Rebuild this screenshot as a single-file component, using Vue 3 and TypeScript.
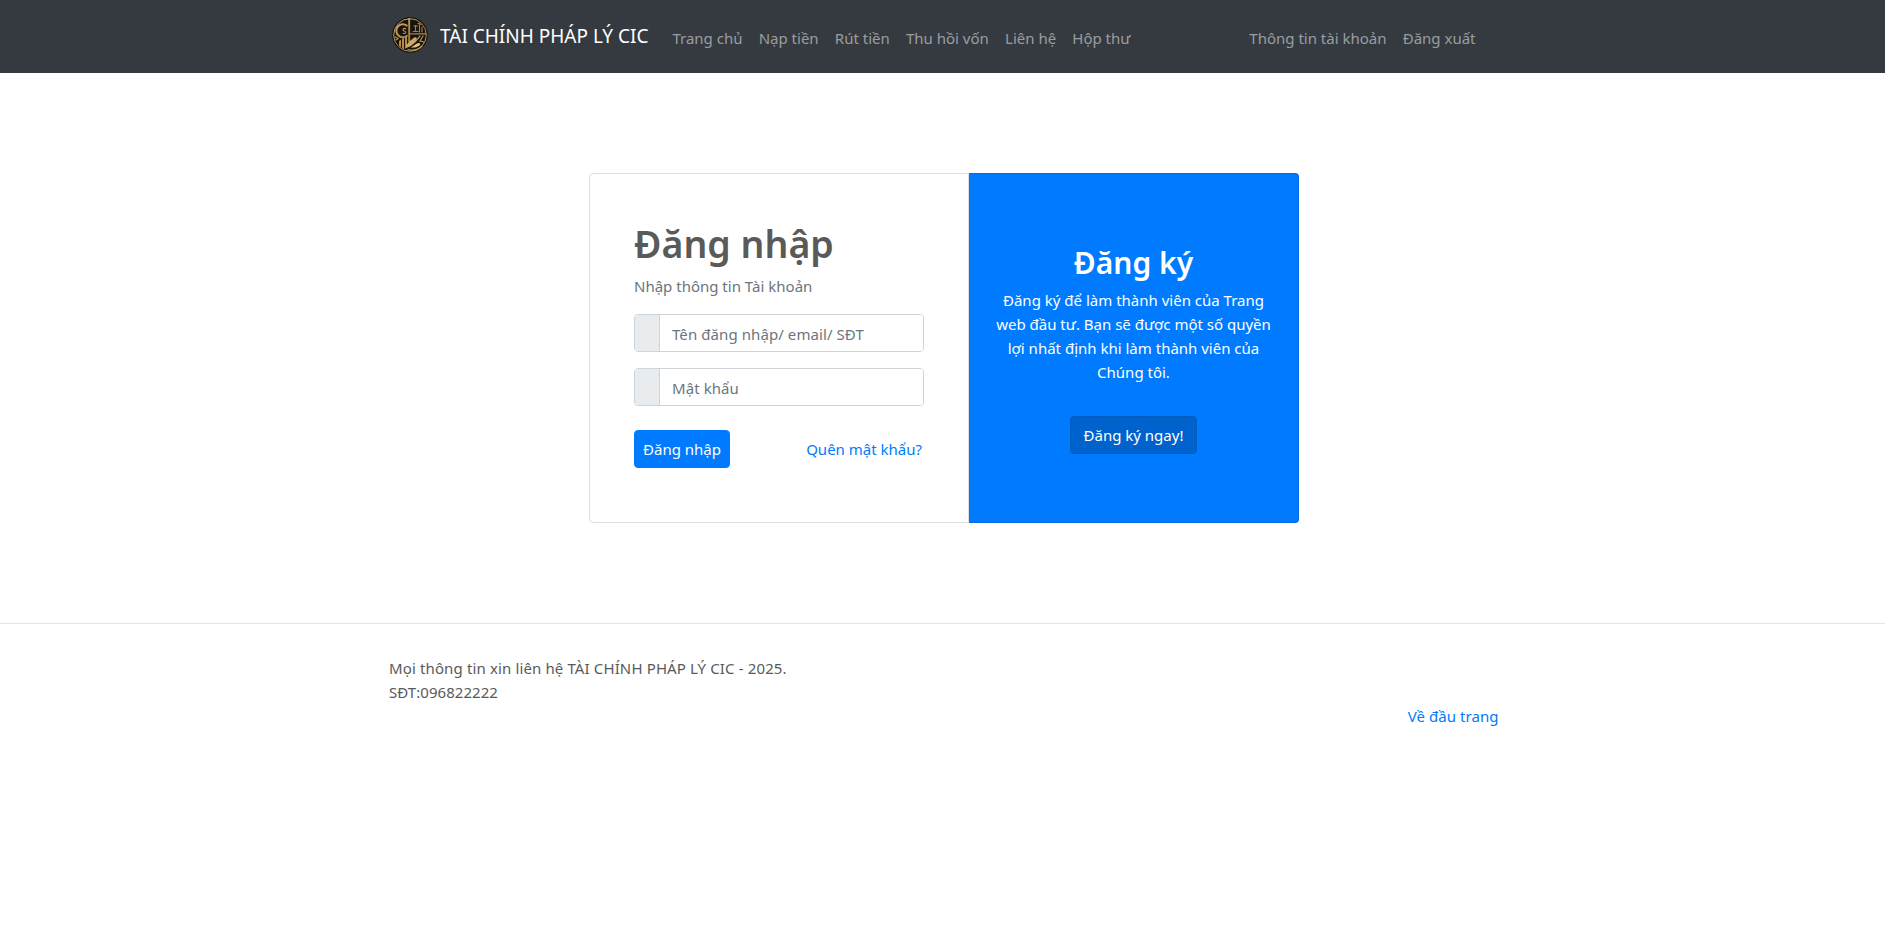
<script setup lang="ts">
import { ref } from 'vue'

const brand = 'TÀI CHÍNH PHÁP LÝ CIC'
const mainLinks: string[] = ['Trang chủ', 'Nạp tiền', 'Rút tiền', 'Thu hồi vốn', 'Liên hệ', 'Hộp thư']
const accountLinks: string[] = ['Thông tin tài khoản', 'Đăng xuất']
const account = ref('')
const password = ref('')
</script>

<template>
  <div class="page">
    <header class="navbar">
      <div class="container nav-inner">
        <a class="brand">
          <svg class="logo" viewBox="0 0 36 36" aria-hidden="true">
            <defs>
              <linearGradient id="gold" gradientUnits="userSpaceOnUse" x1="0" y1="0" x2="36" y2="36">
                <stop offset="0" stop-color="#dcba7c" />
                <stop offset=".5" stop-color="#a5803f" />
                <stop offset="1" stop-color="#cfa65c" />
              </linearGradient>
            </defs>
            <circle cx="18" cy="18" r="17.8" fill="#17130f" />
            <circle cx="18" cy="18" r="16.3" fill="none" stroke="url(#gold)" stroke-width="1" />
            <g fill="none" stroke="url(#gold)" stroke-linecap="round">
              <path d="M14.8 8.6A6.5 6.5 0 1 0 15 18.8" stroke-width="2" />
              <path d="M13.9 11.8c-3-1.3-4 1.6-1.6 2.2 2.6.7 1.6 3.3-1.2 2.2" stroke-width="1.1" />
              <path d="M17.2 1.2v24" stroke-width="1.9" stroke-linecap="butt" />
              <path d="M18 16.8h15.5" stroke-width="1.3" />
              <path d="M21 14.5h5M23.5 8.5v6M27.5 6v9M30 10v5M22 9h3.5M26 6.5l3 1" stroke-width="1.1" />
              <path d="M3.2 20l3 1.5M3.8 23l2-1" stroke-width="1.1" />
              <path d="M16 32.5c5.5 1.7 10 .7 14-3.5" stroke-width="1.3" />
              <path d="M28 19l-5 6M31 19l-3 5 4 1" stroke-width="1.2" />
            </g>
            <path d="M7 24l2-1.5v8L7 28.8zM10 22l2-1.5v12L10 31zM13 20.5l2-1.5v11L13 32z" fill="#b58b45" />
            <path d="M14 29c2.5-4.5 5.5-6 7.5-8 1.8-1.5 4.2-.2 3 1.8-1.8 3.5-4.5 6.5-10.5 8.2z" fill="#cda76b" />
            <path d="M18.5 30.4c3.5-1 5-3.8 8-4.4 2.3-.1 2.4 1.6.6 2.7-2.6 1.5-5.1 2.3-8.6 1.7z" fill="#e0c084" />
          </svg>
          <span>{{ brand }}</span>
        </a>
        <nav class="links">
          <a v-for="link in mainLinks" :key="link">{{ link }}</a>
        </nav>
        <nav class="links account">
          <a v-for="link in accountLinks" :key="link">{{ link }}</a>
        </nav>
      </div>
    </header>

    <main class="cards">
      <form class="card login" @submit.prevent>
        <h1>Đăng nhập</h1>
        <p class="hint">Nhập thông tin Tài khoản</p>
        <div class="field">
          <span class="addon"></span>
          <input v-model="account" type="text" placeholder="Tên đăng nhập/ email/ SĐT" />
        </div>
        <div class="field last">
          <span class="addon"></span>
          <input v-model="password" type="password" placeholder="Mật khẩu" />
        </div>
        <div class="actions">
          <button class="btn submit" type="submit">Đăng nhập</button>
          <a class="forgot">Quên mật khẩu?</a>
        </div>
      </form>
      <section class="card register">
        <h2>Đăng ký</h2>
        <p>Đăng ký để làm thành viên của Trang web đầu tư. Bạn sẽ được một số quyền lợi nhất định khi làm thành viên của Chúng tôi.</p>
        <button class="btn join" type="button">Đăng ký ngay!</button>
      </section>
    </main>

    <footer class="footer">
      <div class="container foot-inner">
        <p>Mọi thông tin xin liên hệ {{ brand }} - 2025.</p>
        <p class="phone">SĐT:096822222</p>
        <a class="top">Về đầu trang</a>
      </div>
    </footer>
  </div>
</template>

<style>
body {
  margin: 0;
  background: #fff;
}
</style>

<style scoped>
.page {
  color: #5a5a5a;
  font: 15px/24px "Noto Sans", "Liberation Sans", sans-serif;
}
.page * {
  box-sizing: border-box;
}
h1, h2, p {
  margin: 0;
}
a {
  cursor: pointer;
}
.container {
  width: 1110px;
  margin: 0 auto;
}
.navbar {
  height: 73px;
  background: #343a40;
}
.nav-inner {
  display: flex;
  height: 73px;
}
.brand {
  display: flex;
  align-items: center;
  height: 70px;
  padding-left: 4px;
  color: #fff;
  font-size: 19px;
  line-height: 30px;
  white-space: nowrap;
}
.brand span {
  padding-top: 1px;
}
.logo {
  width: 36px;
  height: 36px;
  margin-right: 12.5px;
}
.links {
  display: flex;
  gap: 16.2px;
  margin-left: 24px;
  padding-top: 26px;
  color: rgba(255, 255, 255, .5);
  white-space: nowrap;
}
.account {
  margin-left: auto;
  padding-right: 22px;
}
.cards {
  display: flex;
  width: 713px;
  height: 350px;
  margin: 100px auto;
  padding-left: 3px;
}
.card {
  display: flex;
  flex-direction: column;
}
.login {
  width: 380px;
  padding: 46px 44px 0;
  border: 1px solid #dfdfdf;
  border-radius: 4px 0 0 4px;
}
h1 {
  margin-bottom: 6px;
  font-size: 37.5px;
  font-weight: 600;
  line-height: 48px;
}
.hint {
  margin-bottom: 16px;
  color: #6c757d;
}
.field {
  display: flex;
  width: 290px;
  height: 38px;
  margin-bottom: 16px;
  border: 1px solid #ced4da;
  border-radius: 4px;
  overflow: hidden;
}
.field.last {
  margin-bottom: 24px;
}
.addon {
  width: 25px;
  border-right: 1px solid #ced4da;
  background: #e9ecef;
}
input {
  flex: 1;
  min-width: 0;
  margin: 0;
  padding: 2px 12px 0;
  border: 0;
  outline: 0;
  background: #fff;
  color: #495057;
  font: inherit;
  letter-spacing: .08px;
}
input::placeholder {
  color: #6c757d;
  opacity: 1;
}
.actions {
  display: flex;
  align-items: center;
  justify-content: space-between;
  width: 288px;
}
.btn {
  height: 38px;
  padding: 0;
  border: 1px solid #007bff;
  border-radius: 4px;
  background: #007bff;
  color: #fff;
  font: inherit;
  cursor: pointer;
}
.submit {
  width: 96px;
}
.forgot, .top {
  color: #007bff;
}
.register {
  align-items: center;
  width: 330px;
  padding: 70px 20px 0;
  border: 1px solid rgba(0, 0, 0, .125);
  border-left: 0;
  border-radius: 0 4px 4px 0;
  background: #007bff;
  color: #fff;
  text-align: center;
}
h2 {
  margin-bottom: 6px;
  font-size: 30px;
  font-weight: 600;
  line-height: 38px;
}
.join {
  width: 127px;
  margin-top: 32px;
  border-color: #005cbf;
  background: #0062cc;
}
.footer {
  padding-top: 32px;
  border-top: 1px solid #e5e5e5;
}
.foot-inner {
  display: flex;
  flex-direction: column;
  padding-left: 1.5px;
  letter-spacing: .13px;
}
.phone, .top {
  letter-spacing: .05px;
}
.top {
  align-self: flex-end;
  margin-right: -1px;
}
</style>
